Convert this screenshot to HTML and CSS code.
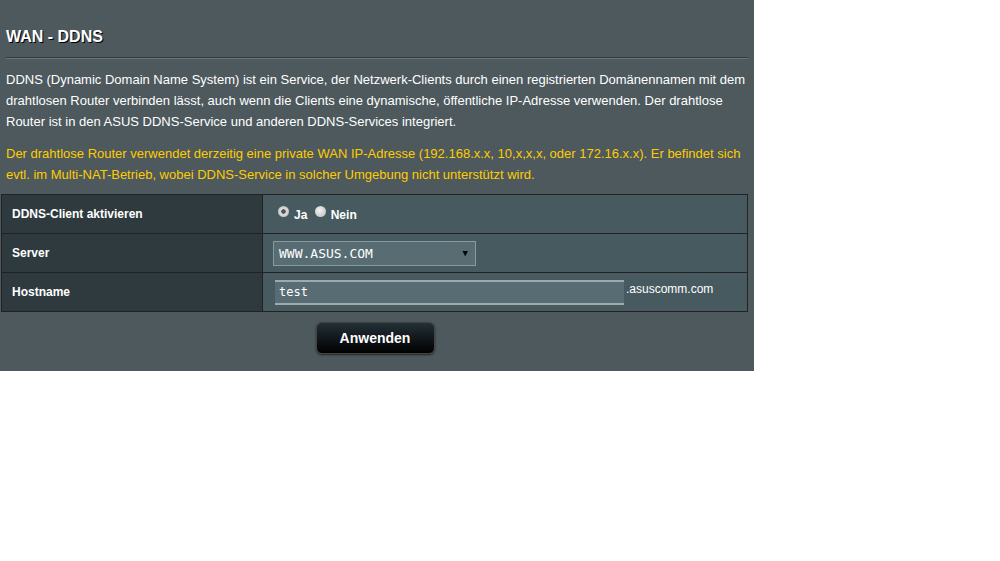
FILE: index.html
```html
<!DOCTYPE html>
<html lang="de">
  <head>
    <meta charset="UTF-8" />
    <meta name="viewport" content="width=device-width, initial-scale=1.0" />
    <title>WAN - DDNS</title>
    <link rel="stylesheet" href="styles.css">
  </head>
  <body>
    <div class="panel">
      <div class="title">WAN - DDNS</div>
      <div class="divider"></div>
      <p class="desc">
        DDNS (Dynamic Domain Name System) ist ein Service, der Netzwerk-Clients durch einen registrierten Domänennamen mit dem
        drahtlosen Router verbinden lässt, auch wenn die Clients eine dynamische, öffentliche IP-Adresse verwenden. Der drahtlose
        Router ist in den ASUS DDNS-Service und anderen DDNS-Services integriert.
      </p>
      <p class="warn">
        Der drahtlose Router verwendet derzeitig eine private WAN IP-Adresse (192.168.x.x, 10,x,x,x, oder 172.16.x.x). Er befindet sich
        evtl. im Multi-NAT-Betrieb, wobei DDNS-Service in solcher Umgebung nicht unterstützt wird.
      </p>
      <table class="form-table">
        <tr>
          <th>DDNS-Client aktivieren</th>
          <td>
            <label class="radio"><input type="radio" name="ddns" checked /> Ja</label>
            <label class="radio"><input type="radio" name="ddns" /> Nein</label>
          </td>
        </tr>
        <tr>
          <th>Server</th>
          <td>
            <div class="select">
              <span>WWW.ASUS.COM</span>
              <span class="arrow">&#9660;</span>
            </div>
          </td>
        </tr>
        <tr>
          <th>Hostname</th>
          <td>
            <div class="host">
              <input class="text-input" type="text" value="test" />
              <span class="suffix">.asuscomm.com</span>
            </div>
          </td>
        </tr>
      </table>
      <div class="apply-row">
        <button class="button-apply">Anwenden</button>
      </div>
    </div>
  </body>
</html>
```

FILE: styles.css
```css
* {
  margin: 0;
  padding: 0;
  box-sizing: border-box;
}
body {
  background-color: #fff;
  font-family: "Liberation Sans", Arial, sans-serif;
}
.panel {
  width: 754px;
  height: 371px;
  background-color: #4d595d;
  color: #fff;
  padding: 27px 5px 0 1px;
}
.title {
  font-size: 16px;
  font-weight: bold;
  line-height: 20px;
  padding-left: 5px;
  text-shadow: 1px 1px 0 #000;
}
.divider {
  margin: 10px 1px 0 5px;
  height: 2px;
  border-top: 1px solid #2e3a3d;
  border-bottom: 1px solid #6b7579;
}
.desc,
.warn {
  font-size: 13px;
  line-height: 21px;
  padding-left: 5px;
}
.desc {
  margin-top: 10px;
}
.warn {
  margin-top: 11px;
  color: #ffcc00;
}
.form-table {
  margin-top: 9px;
  width: 747px;
  border-collapse: collapse;
  border: 1px solid #222;
}
.form-table th,
.form-table td {
  height: 39px;
  border: 1px solid #222;
  font-size: 12px;
  font-weight: bold;
  text-align: left;
  vertical-align: middle;
}
.form-table th {
  width: 261px;
  background-color: #2f3a3e;
  padding-left: 10px;
}
.form-table td {
  background-color: #475a5f;
  padding-left: 10px;
}
.form-table td:first-of-type .radio:first-child {
  margin-left: 5px;
}
.radio {
  display: inline-flex;
  align-items: center;
  gap: 5px;
  margin-right: 4px;
  font-size: 12px;
}
.radio input {
  appearance: none;
  width: 11px;
  height: 11px;
  border-radius: 50%;
  background: radial-gradient(circle at 40% 40%, #f4f4f4, #b8b8b8);
  margin-top: -6px;
}
.radio input:checked {
  background: radial-gradient(circle, #555 0 2px, #e0e0e0 2.5px, #b0b0b0);
}
.select {
  width: 203px;
  height: 25px;
  display: flex;
  align-items: center;
  justify-content: space-between;
  padding: 0 7px 0 5px;
  background-color: #576d73;
  border: 1px solid #8a999c;
  font-family: "DejaVu Sans Mono", "Liberation Mono", monospace;
  font-size: 13px;
  font-weight: normal;
}
.arrow {
  color: #000;
  font-size: 9px;
}
.host {
  display: flex;
  align-items: center;
  padding-left: 2px;
}
.text-input {
  width: 349px;
  height: 25px;
  padding-left: 4px;
  background-color: #576d73;
  color: #fff;
  border: none;
  border-top: 2px solid #a0aaad;
  border-bottom: 2px solid #a0aaad;
  font-family: "DejaVu Sans Mono", "Liberation Mono", monospace;
  font-size: 12px;
  outline: none;
}
.suffix {
  font-size: 12px;
  font-weight: normal;
  margin-left: 2px;
  margin-top: -6px;
}
.apply-row {
  display: flex;
  justify-content: center;
  padding-top: 10px;
}
.button-apply {
  width: 119px;
  height: 32px;
  border-radius: 6px;
  border: 1px solid #444;
  background: linear-gradient(to bottom, #233037, #000);
  color: #fff;
  font-family: "Liberation Sans", Arial, sans-serif;
  font-size: 14px;
  font-weight: bold;
  box-shadow: 0 1px 2px #222;
}
```
